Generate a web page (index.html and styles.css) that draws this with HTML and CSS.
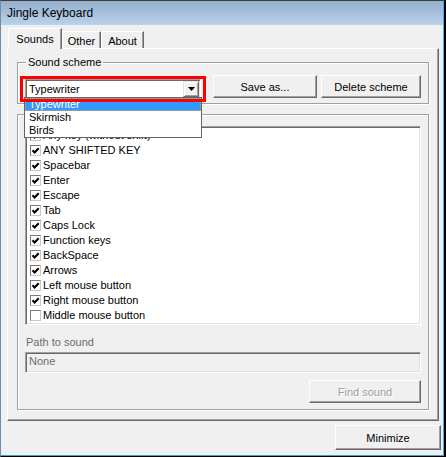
FILE: index.html
```html
<!DOCTYPE html>
<html lang="en">
<head>
    <meta charset="UTF-8">
    <title>Jingle Keyboard</title>
    <link rel="stylesheet" href="styles.css">
</head>
<body>

    <div class="window">
        <div class="titlebar">Jingle Keyboard</div>

        <div class="client">
            <!-- tab headers -->
            <div class="tabs">
                <div class="tab active">Sounds</div>
                <div class="tab">Other</div>
                <div class="tab">About</div>
            </div>

            <div class="panel">
                <fieldset class="group scheme">
                    <legend>Sound scheme</legend>
                    <div class="scheme-row">
                        <div class="highlight">
                            <div class="combo">
                                <span class="combo-text">Typewriter</span>
                                <span class="combo-btn">
                                    <svg width="7" height="4" viewBox="0 0 7 4"><polygon points="0,0 7,0 3.5,4" fill="#000"/></svg>
                                </span>
                            </div>
                            <ul class="dropdown">
                                <li class="selected">Typewriter</li>
                                <li>Skirmish</li>
                                <li>Birds</li>
                            </ul>
                        </div>
                        <button class="btn save">Save as...</button>
                        <button class="btn delete">Delete scheme</button>
                    </div>
                </fieldset>

                <div class="group keys">
                    <ul class="keylist">
                        <li><span class="check on"><svg width="9" height="9" viewBox="0 0 9 9"><polyline points="1.5,4.3 3.6,6.5 7.7,2.2" fill="none" stroke="#000" stroke-width="2"/></svg></span>Any key (without shift)</li>
                        <li><span class="check on"><svg width="9" height="9" viewBox="0 0 9 9"><polyline points="1.5,4.3 3.6,6.5 7.7,2.2" fill="none" stroke="#000" stroke-width="2"/></svg></span>ANY SHIFTED KEY</li>
                        <li><span class="check on"><svg width="9" height="9" viewBox="0 0 9 9"><polyline points="1.5,4.3 3.6,6.5 7.7,2.2" fill="none" stroke="#000" stroke-width="2"/></svg></span>Spacebar</li>
                        <li><span class="check on"><svg width="9" height="9" viewBox="0 0 9 9"><polyline points="1.5,4.3 3.6,6.5 7.7,2.2" fill="none" stroke="#000" stroke-width="2"/></svg></span>Enter</li>
                        <li><span class="check on"><svg width="9" height="9" viewBox="0 0 9 9"><polyline points="1.5,4.3 3.6,6.5 7.7,2.2" fill="none" stroke="#000" stroke-width="2"/></svg></span>Escape</li>
                        <li><span class="check on"><svg width="9" height="9" viewBox="0 0 9 9"><polyline points="1.5,4.3 3.6,6.5 7.7,2.2" fill="none" stroke="#000" stroke-width="2"/></svg></span>Tab</li>
                        <li><span class="check on"><svg width="9" height="9" viewBox="0 0 9 9"><polyline points="1.5,4.3 3.6,6.5 7.7,2.2" fill="none" stroke="#000" stroke-width="2"/></svg></span>Caps Lock</li>
                        <li><span class="check on"><svg width="9" height="9" viewBox="0 0 9 9"><polyline points="1.5,4.3 3.6,6.5 7.7,2.2" fill="none" stroke="#000" stroke-width="2"/></svg></span>Function keys</li>
                        <li><span class="check on"><svg width="9" height="9" viewBox="0 0 9 9"><polyline points="1.5,4.3 3.6,6.5 7.7,2.2" fill="none" stroke="#000" stroke-width="2"/></svg></span>BackSpace</li>
                        <li><span class="check on"><svg width="9" height="9" viewBox="0 0 9 9"><polyline points="1.5,4.3 3.6,6.5 7.7,2.2" fill="none" stroke="#000" stroke-width="2"/></svg></span>Arrows</li>
                        <li><span class="check on"><svg width="9" height="9" viewBox="0 0 9 9"><polyline points="1.5,4.3 3.6,6.5 7.7,2.2" fill="none" stroke="#000" stroke-width="2"/></svg></span>Left mouse button</li>
                        <li><span class="check on"><svg width="9" height="9" viewBox="0 0 9 9"><polyline points="1.5,4.3 3.6,6.5 7.7,2.2" fill="none" stroke="#000" stroke-width="2"/></svg></span>Right mouse button</li>
                        <li><span class="check"></span>Middle mouse button</li>
                    </ul>

                    <div class="path-label">Path to sound</div>
                    <div class="path-box">None</div>
                    <div class="find-row">
                        <button class="btn find" disabled>Find sound</button>
                    </div>
                </div>
            </div>

            <div class="bottom-row">
                <button class="btn minimize">Minimize</button>
            </div>
        </div>
    </div>

</body>
</html>
```

FILE: styles.css
```css
* {
    margin: 0;
    padding: 0;
    box-sizing: border-box;
}

body {
    font-family: "Liberation Sans", Arial, sans-serif;
    font-size: 11px;
    color: #000;
    background: #fff;
}

/* window frame */
.window {
    width: 446px;
    height: 457px;
    border-top: 1px solid #3b3b3b;
    border-left: 1px solid #6f8cab;
    border-right: 2px solid #000;
    border-bottom: 1px solid #000;
    display: flex;
    flex-direction: column;
}

.titlebar {
    height: 24px;
    line-height: 24px;
    padding-left: 6px;
    font-size: 12px;
    background: linear-gradient(#93afcc, #bad2ec);
    border-right: 1px solid #3cb4e8;
}

.client {
    height: 431px;
    background: #f0f0f0;
    border-right: 1px solid #3cb4e8;
    border-bottom: 1px solid #3c9fd9;
    display: flex;
    flex-direction: column;
}

/* tabs */
.tabs {
    display: flex;
    align-items: flex-end;
    height: 20px;
    margin-top: 3px;
    padding-left: 7px;
}

.tab {
    height: 17px;
    padding-top: 3px;
    text-align: center;
    line-height: 13px;
    border-left: 1px solid #fff;
    border-top: 1px solid #fff;
    border-right: 1px solid #696969;
    box-shadow: inset -1px 0 0 #a0a0a0;
    background: #f0f0f0;
}

.tab:nth-child(2) {
    width: 39px;
}

.tab:nth-child(3) {
    width: 43px;
}

.tab.active {
    position: relative;
    z-index: 1;
    width: 54px;
    height: 21px;
    padding-top: 4px;
    margin-bottom: -1px;
}

.panel {
    margin-left: 6px;
    width: 432px;
    height: 373px;
    padding: 7px 9px 0 9px;
    border-top: 1px solid #fff;
    border-left: 1px solid #fff;
    border-right: 1px solid #696969;
    border-bottom: 1px solid #696969;
    box-shadow: inset -1px -1px 0 #a0a0a0;
}

/* group boxes */
.group {
    border: 1px solid #a0a0a0;
    box-shadow: inset 1px 1px 0 #fff, 1px 1px 0 #fff;
}

.scheme {
    padding: 0 0 1px 2px;
}

.scheme legend {
    margin-left: 6px;
    padding: 0 2px;
    line-height: 12px;
    background: #f0f0f0;
}

.scheme-row {
    display: flex;
    align-items: flex-start;
}

.highlight {
    position: relative;
    width: 186px;
    height: 26px;
    margin-top: 8px;
    padding: 3px 1px 3px 5px;
}

.highlight::after {
    content: "";
    position: absolute;
    left: 0;
    top: 0;
    right: 0;
    bottom: 0;
    border: 3px solid #f00;
    z-index: 4;
}

.combo {
    display: flex;
    width: 176px;
    height: 20px;
    background: #fff;
    border-top: 1px solid #a0a0a0;
    border-left: 1px solid #a0a0a0;
    border-right: 1px solid #fff;
    border-bottom: 1px solid #fff;
    box-shadow: inset 1px 1px 0 #696969, inset -1px -1px 0 #e3e3e3;
    padding: 1px;
}

.combo-text {
    flex: 1;
    padding-left: 2px;
    line-height: 16px;
}

.combo-btn {
    width: 16px;
    height: 16px;
    display: flex;
    align-items: center;
    justify-content: center;
    background: #f0f0f0;
    border-top: 1px solid #e3e3e3;
    border-left: 1px solid #e3e3e3;
    border-right: 1px solid #696969;
    border-bottom: 1px solid #696969;
    box-shadow: inset 1px 1px 0 #fff, inset -1px -1px 0 #a0a0a0;
}

.dropdown {
    list-style: none;
    position: absolute;
    left: 4px;
    top: 21px;
    width: 178px;
    height: 41px;
    background: #fff;
    border: 1px solid #646464;
    z-index: 3;
}

.dropdown li {
    height: 13px;
    line-height: 13px;
    padding-left: 4px;
}

.dropdown li.selected {
    background: #3399ff;
    color: #fff;
    outline: 1px dotted #e8a040;
    outline-offset: -1px;
}

/* buttons */
.btn {
    font: inherit;
    color: #000;
    background: #f0f0f0;
    border-top: 1px solid #fff;
    border-left: 1px solid #fff;
    border-right: 1px solid #696969;
    border-bottom: 1px solid #696969;
    box-shadow: inset -1px -1px 0 #a0a0a0;
    height: 23px;
}

.save {
    width: 104px;
    margin: 7px 0 0 7px;
}

.delete {
    width: 100px;
    margin: 7px 0 0 4px;
}

.keys {
    margin-top: 10px;
    height: 296px;
    padding: 11px 7px 0 7px;
}

.keylist {
    list-style: none;
    height: 199px;
    overflow: hidden;
    background: #fff;
    border-top: 1px solid #a0a0a0;
    border-left: 1px solid #a0a0a0;
    border-right: 1px solid #fff;
    border-bottom: 1px solid #fff;
    box-shadow: inset 1px 1px 0 #696969, inset -1px -1px 0 #e3e3e3;
    padding: 1px 1px 1px 4px;
}

.keylist li {
    display: flex;
    align-items: center;
    height: 15px;
    line-height: 15px;
    white-space: nowrap;
}

.check {
    width: 11px;
    height: 11px;
    margin-right: 2px;
    display: flex;
    align-items: center;
    justify-content: center;
    background: #fff;
    border-top: 1px solid #7a7a7a;
    border-left: 1px solid #7a7a7a;
    border-right: 1px solid #c8c8c8;
    border-bottom: 1px solid #c8c8c8;
}

.path-label {
    margin-top: 11px;
    padding-left: 1px;
    line-height: 13px;
    color: #6d6d6d;
}

.path-box {
    margin-top: 3px;
    height: 21px;
    line-height: 17px;
    padding-left: 3px;
    color: #6d6d6d;
    border-top: 1px solid #a0a0a0;
    border-left: 1px solid #a0a0a0;
    border-right: 1px solid #fff;
    border-bottom: 1px solid #fff;
    box-shadow: inset 1px 1px 0 #696969, inset -1px -1px 0 #e3e3e3;
}

.find-row {
    display: flex;
    justify-content: flex-end;
    margin-top: 7px;
}

.find {
    width: 112px;
    color: #a0a0a0;
    text-shadow: 1px 1px 0 #fff;
}

.bottom-row {
    display: flex;
    justify-content: flex-end;
    margin-top: 4px;
    padding-right: 2px;
}

.minimize {
    width: 106px;
    height: 25px;
}
```
